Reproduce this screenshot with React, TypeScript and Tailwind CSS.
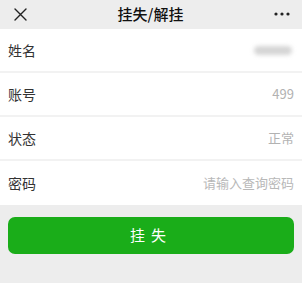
import React from "react";

const font = { fontFamily: '"Noto Sans CJK SC", "Noto Sans", sans-serif' };

function Row({ label, children, last }: { label: string; children?: React.ReactNode; last?: boolean }) {
  return (
    <div className={`flex h-[44px] items-center justify-between px-2 ${last ? "" : "border-b-2 border-[#f2f2f2]"}`}>
      <span className="text-[14px] text-[#333]">{label}</span>
      {children}
    </div>
  );
}

export default function App() {
  return (
    <div className="w-[302px] h-[283px] bg-[#ededed]" style={font}>
      <div className="flex h-[28px] items-center justify-between pl-[14px] pr-3 bg-[#ededed]">
        <svg width="13" height="13" viewBox="0 0 13 13">
          <path d="M1 1 L12 12 M12 1 L1 12" stroke="#222" strokeWidth="1.4" strokeLinecap="round" />
        </svg>
        <span className="text-[15px] font-medium text-[#111]">挂失/解挂</span>
        <svg width="16" height="4" viewBox="0 0 16 4">
          <circle cx="2" cy="2" r="1.6" fill="#222" />
          <circle cx="8" cy="2" r="1.6" fill="#222" />
          <circle cx="14" cy="2" r="1.6" fill="#222" />
        </svg>
      </div>
      <div className="mt-[1px] bg-white">
        <Row label="姓名">
          <div className="mr-[2px] h-[9px] w-[38px] rounded-full bg-[#d5d5d5] blur-[2px]" />
        </Row>
        <Row label="账号">
          <span className="text-[13px] text-[#b2b2b2]">499</span>
        </Row>
        <Row label="状态">
          <span className="text-[13px] text-[#b2b2b2]">正常</span>
        </Row>
        <Row label="密码" last>
          <span className="text-[13px] text-[#b8b8b8]">请输入查询密码</span>
        </Row>
      </div>
      <div className="px-2 pt-[12px]">
        <button className="flex h-[37px] w-full items-center justify-center rounded-[7px] bg-[#1aad19] text-[15px] tracking-[6px] text-white">
          挂失
        </button>
      </div>
    </div>
  );
}
